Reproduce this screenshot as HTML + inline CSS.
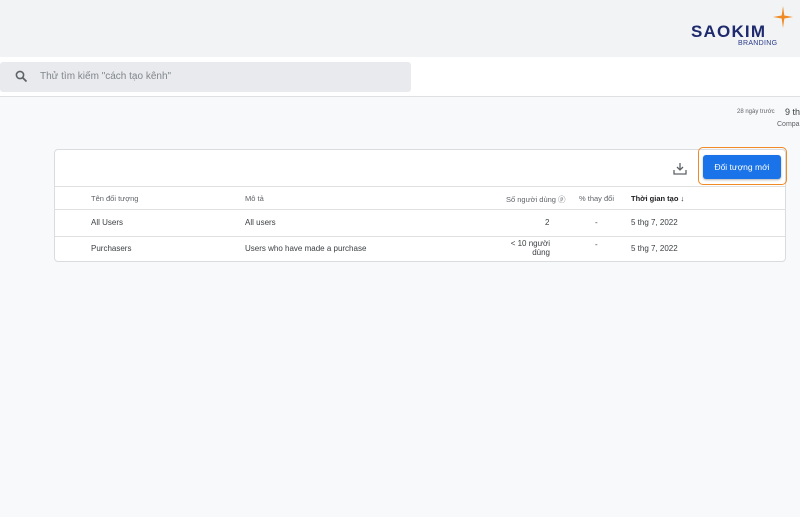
<!DOCTYPE html>
<html><head><meta charset="utf-8"><style>
*{margin:0;padding:0;box-sizing:border-box}
body{width:800px;height:517px;background:#f8f9fa;font-family:"Liberation Sans","Noto Sans CJK SC",sans-serif;position:relative;overflow:hidden;color:#3c4043}
.top{position:absolute;left:0;top:0;width:800px;height:57px;background:#f1f3f4}
.bar{position:absolute;left:0;top:57px;width:800px;height:40px;background:#fff;border-bottom:1px solid #e0e0e0}
.search{position:absolute;left:0;top:62px;width:411px;height:30px;background:#e8eaed;border-radius:3px}
.search span{position:absolute;left:40px;top:9px;font-size:10px;color:#80868b}
.card{position:absolute;left:54px;top:149px;width:732px;height:113px;background:#fff;border:1px solid #dadce0;border-radius:4px}
.row{position:absolute;left:0;width:730px;border-top:1px solid #e0e0e0;font-size:8px}
.row span{position:absolute}
.btn{position:absolute;left:648px;top:5px;width:78px;height:24px;background:#1a73e8;border-radius:3px;color:#fff;font-size:8.5px;text-align:center;line-height:24px;box-shadow:0 1px 2px rgba(0,0,0,.3)}
.ring{position:absolute;left:643px;top:-3px;width:89px;height:38px;border:1px solid #f08a24;border-radius:5px}
</style></head><body>
<div class="top"></div>
<div style="position:absolute;left:691px;top:22px;font-size:17px;font-weight:bold;color:#1f2a6e;letter-spacing:1.2px">SAOKIM</div>
<div style="position:absolute;left:738px;top:40px;font-size:7px;color:#2a3a8a;letter-spacing:.3px">BRANDING</div>
<svg style="position:absolute;left:773px;top:6px" width="20" height="22" viewBox="0 0 20 22"><path d="M10 0 L11.3 9.5 L20 11 L11.3 12.5 L10 22 L8.7 12.5 L0 11 L8.7 9.5Z" fill="#f08a24"/></svg>
<div class="bar"></div>
<div class="search"><svg style="position:absolute;left:15px;top:8px" width="13" height="13" viewBox="0 0 13 13"><circle cx="5" cy="5" r="3.6" fill="none" stroke="#5f6368" stroke-width="1.6"/><path d="M7.6 7.6 L11.5 11.5" stroke="#5f6368" stroke-width="1.8"/></svg><span>Thử tìm kiếm "cách tạo kênh"</span></div>
<div style="position:absolute;left:737px;top:109px;font-size:6px;color:#5f6368">28 ngày trước</div>
<div style="position:absolute;left:785px;top:107px;font-size:9px;color:#3c4043">9 th</div>
<div style="position:absolute;left:777px;top:121px;font-size:7px;color:#5f6368">Compa</div>
<div class="card">
<svg style="position:absolute;left:618px;top:12px" width="14" height="13" viewBox="0 0 14 13"><path d="M7 1v7M4 5l3 3 3-3M1 8v4h12V8" fill="none" stroke="#5f6368" stroke-width="1.3"/></svg>
<div class="ring"></div><div class="btn">Đối tượng mới</div>
<div class="row" style="top:36px;height:23px;color:#5f6368;font-size:7.5px"><span style="left:36px;top:7px">Tên đối tượng</span><span style="left:190px;top:7px">Mô tả</span><span style="left:451px;top:7px">Số người dùng ⓟ</span><span style="left:524px;top:7px">% thay đổi</span><span style="left:576px;top:7px;font-weight:bold;color:#202124">Thời gian tạo ↓</span></div>
<div class="row" style="top:59px;height:27px"><span style="left:36px;top:8px">All Users</span><span style="left:190px;top:8px">All users</span><span style="left:490px;top:8px">2</span><span style="left:540px;top:8px">-</span><span style="left:576px;top:8px">5 thg 7, 2022</span></div>
<div class="row" style="top:86px;height:26px"><span style="left:190px;top:7px">Users who have made a purchase</span><span style="left:36px;top:7px">Purchasers</span><span style="left:455px;top:2px;text-align:right;width:40px;line-height:9px">&lt; 10 người dùng</span><span style="left:540px;top:3px">-</span><span style="left:576px;top:7px">5 thg 7, 2022</span></div>
</div>
</body></html>
